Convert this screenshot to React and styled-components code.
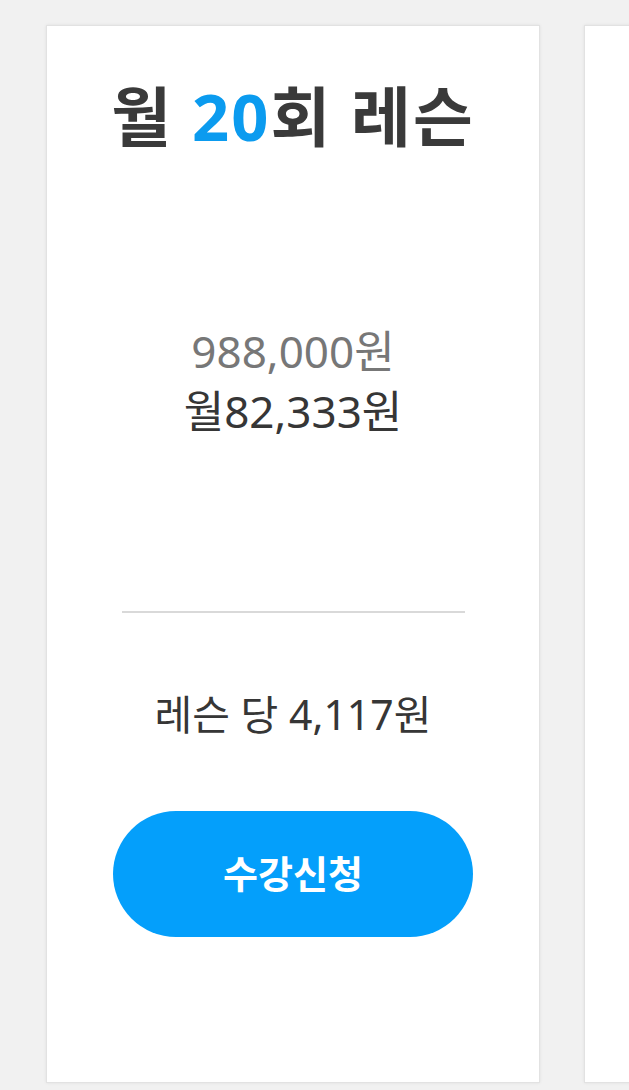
import React from "react";
import styled, { createGlobalStyle } from "styled-components";

const GlobalStyle = createGlobalStyle`
  html, body {
    margin: 0;
    padding: 0;
    background: #f1f1f1;
    overflow: hidden;
  }
  body {
    font-family: "Noto Sans", "Noto Sans CJK KR", sans-serif;
    color: #3a3a3a;
  }
`;

const Page = styled.div`
  display: flex;
  align-items: flex-start;
  gap: 44px;
  padding: 25px 0 0 46px;
  min-height: 1090px;
  box-sizing: border-box;
  width: max-content;
`;

const Card = styled.section`
  box-sizing: border-box;
  width: 494px;
  height: 1058px;
  flex: none;
  background: #ffffff;
  border: 1px solid #e2e2e2;
  box-shadow: 0 0 3px rgba(0, 0, 0, 0.08);
  display: flex;
  flex-direction: column;
  align-items: center;
  padding-top: 58px;
`;

const Title = styled.h2`
  margin: 0;
  font-size: 65px;
  line-height: 64px;
  font-weight: 700;
  letter-spacing: 2px;
  color: #3a3a3a;
  white-space: nowrap;
`;

const Accent = styled.span`
  color: #0b9bef;
`;

const Prices = styled.div`
  margin-top: 173px;
  display: flex;
  flex-direction: column;
  align-items: center;
`;

const PriceLine = styled.div`
  font-size: 44px;
  line-height: 60px;
  font-weight: 400;
  color: ${(p) => (p.$muted ? "#777777" : "#363636")};
  white-space: nowrap;
`;

const Divider = styled.hr`
  margin: 170px 0 0;
  width: 343px;
  height: 2px;
  border: none;
  background: #d9d9d9;
`;

const PerLesson = styled.div`
  margin-top: 81px;
  font-size: 41px;
  line-height: 41px;
  color: #363636;
  white-space: nowrap;
`;

const ApplyButton = styled.button`
  margin-top: 76px;
  width: 360px;
  height: 126px;
  border: none;
  border-radius: 63px;
  background: #049ffb;
  color: #ffffff;
  font-family: "Noto Sans CJK KR", "Noto Sans", sans-serif;
  font-size: 38px;
  font-weight: 700;
  line-height: 1;
  display: flex;
  align-items: center;
  justify-content: center;
  cursor: pointer;
  padding: 0 0 4px;
`;

const plan = { count: 20, total: "988,000원", monthly: "월82,333원", per: "레슨 당 4,117원" };

export default function App() {
  return (
    <>
      <GlobalStyle />
      <Page>
        <Card>
          <Title>
            월 <Accent>{plan.count}</Accent>회 레슨
          </Title>
          <Prices>
            <PriceLine $muted>{plan.total}</PriceLine>
            <PriceLine>{plan.monthly}</PriceLine>
          </Prices>
          <Divider />
          <PerLesson>{plan.per}</PerLesson>
          <ApplyButton type="button">수강신청</ApplyButton>
        </Card>
        <Card aria-hidden="true" />
      </Page>
    </>
  );
}
